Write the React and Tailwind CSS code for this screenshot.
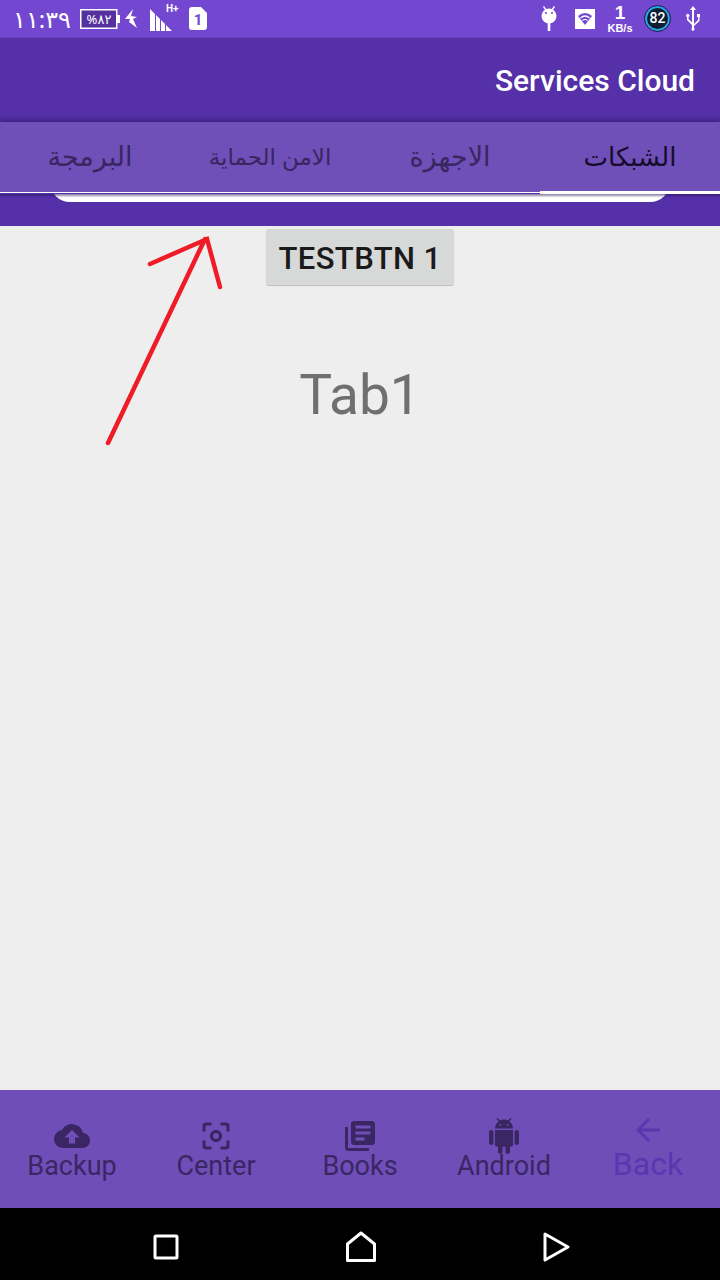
import React from "react";
import { MdCloudUpload, MdCenterFocusWeak, MdLibraryBooks, MdArrowBack } from "react-icons/md";

function Tab({ label, active, size }) {
  return (
    <div className={`flex-1 flex items-center justify-center ${size} ${active ? "text-[#140c2a]" : "text-[#38265f]"}`}>
      <span dir="rtl">{label}</span>
    </div>
  );
}

function AndroidIcon() {
  return (
    <svg width="36" height="36" viewBox="0 0 24 24" fill="currentColor">
      <path d="M6 18c0 .55.45 1 1 1h1v3.5c0 .83.67 1.5 1.5 1.5s1.5-.67 1.5-1.5V19h2v3.5c0 .83.67 1.5 1.5 1.5s1.5-.67 1.5-1.500V19h1c.55 0 1-.45 1-1V8H6v10zM3.5 8C2.67 8 2 8.67 2 9.5v7c0 .83.67 1.5 1.5 1.5S5 17.33 5 16.5v-7C5 8.67 4.33 8 3.5 8zm17 0c-.83 0-1.5.67-1.5 1.5v7c0 .83.67 1.5 1.5 1.5s1.5-.67 1.5-1.500v-7c0-.83-.67-1.5-1.500-1.500zm-4.970-5.840l1.300-1.300c.2-.2.2-.51 0-.71-.2-.2-.51-.2-.71 0l-1.480 1.480C13.850 1.230 12.950 1 12 1c-.96 0-1.860.23-2.660.63L7.850.15c-.2-.2-.51-.2-.71 0-.2.2-.2.51 0 .71l1.310 1.310C6.970 3.260 6 5.010 6 7h12c0-1.990-.97-3.750-2.470-4.840zM10 5H9V4h1v1zm5 0h-1V4h1v1z" />
    </svg>
  );
}

function NavItem({ icon, label, dim }) {
  return (
    <div className={`flex-1 flex flex-col items-center ${dim ? "text-[#5a36b0]" : "text-[#3a2663]"}`}>
      <div className="h-[36px] flex items-end justify-center">{icon}</div>
      <span className={`leading-[30px] ${dim ? "text-[32px] -mt-[5px]" : "text-[27px] -mt-[3px]"}`}>{label}</span>
    </div>
  );
}

export default function App() {
  return (
    <div className="relative w-[720px] h-[1280px] flex flex-col bg-[#eeeeee] overflow-hidden font-['Roboto','Noto_Sans',sans-serif]">
      {/* status bar */}
      <div className="h-[38px] shrink-0 bg-[#7347cf] border-b border-[#6a40c0] flex items-center justify-between pl-[13px] pr-[19px] text-white">
        <div className="flex items-center">
          <span dir="ltr" className="text-[24px] leading-none tracking-[-1px] font-['Noto_Sans','DejaVu_Sans',sans-serif] w-[67px]">١١:٣٩</span>
          <svg width="40" height="20" viewBox="0 0 40 20" className="block">
            <rect x="0.750" y="0.750" width="36" height="18.500" fill="#55309f" stroke="#fff" strokeWidth="1.500" />
            <rect x="37" y="6" width="3" height="8" fill="#fff" />
            <text x="19" y="15" textAnchor="middle" fontSize="13" fontWeight="400" fill="#fff" fontFamily="Noto Sans, DejaVu Sans">%٨٢</text>
          </svg>
          <svg width="14" height="20" viewBox="0 0 14 20" className="ml-[4px]">
            <path d="M9 0 L1 10 L6 10 L5 13 L13 19 L9 10 L13 8 L7 7 Z" fill="#fff" />
          </svg>
          <div className="relative ml-[12px] mt-[2px] w-[22px] h-[22px]">
            <svg width="22" height="22" viewBox="0 0 22 22" className="block">
              <path d="M0 0 L5 5 V22 H0 Z M6 6 L10 10 V22 H6 Z M11 11 L15 15 V22 H11 Z M16 16 L22 22 H16 Z" fill="#fff" />
            </svg>
            <span className="absolute left-[16px] -top-[5px] text-[10px] font-bold leading-none">H+</span>
          </div>
          <svg width="18" height="23" viewBox="0 0 18 23" className="ml-[17px]">
            <path d="M3 0 H12 L18 6 V20 a3 3 0 0 1 -3 3 H3 a3 3 0 0 1 -3 -3 V3 a3 3 0 0 1 3 -3 Z" fill="#fff" />
            <text x="9" y="18" textAnchor="middle" fontSize="15" fontWeight="700" fill="#7347cf" fontFamily="Roboto">1</text>
          </svg>
        </div>
        <div className="flex items-center">
          <svg width="16" height="25" viewBox="0 0 16 25">
            <path d="M2.500 0.500 L5 4 M13.500 0.500 L11 4" stroke="#fff" strokeWidth="1.300" />
            <circle cx="8" cy="10" r="7.500" fill="#fff" />
            <rect x="6.700" y="16" width="2.600" height="9" fill="#fff" />
            <circle cx="5" cy="7" r="1" fill="#7347cf" />
            <circle cx="11" cy="7" r="1" fill="#7347cf" />
          </svg>
          <svg width="20" height="20" viewBox="0 0 20 20" className="ml-[18px]">
            <rect width="20" height="20" fill="#fff" />
            <path d="M3 7 Q10 1 17 7 L10 16 Z" fill="#7347cf" />
            <path d="M5.500 9 Q10 5 14.500 9 M7.500 11.500 Q10 9.500 12.500 11.500" stroke="#fff" strokeWidth="1.200" fill="none" />
          </svg>
          <div className="ml-[12px] w-[26px] flex flex-col items-center font-['Liberation_Sans',sans-serif] font-bold leading-none">
            <span className="text-[19px] leading-[16px]">1</span>
            <span className="text-[11px] leading-[10px] mt-[2px]">KB/s</span>
          </div>
          <div className="ml-[12px] w-[25px] h-[25px] rounded-full bg-[#0b1f33] border-[2px] border-[#2aa7e8] outline outline-1 outline-[#14233f] flex items-center justify-center text-[14px] font-medium">82</div>
          <svg width="16" height="25" viewBox="0 0 16 25" className="ml-[15px]">
            <path d="M8 0 L11 4 H9 V18 L13 14 V11 H12 V8 H15 V11 H14.500 V15 L9 20 V22 a1.500 1.500 0 1 1 -2 0 V19 L2 14 V11 a1.600 1.600 0 1 1 1.500 0 V13 L7 16.500 V4 H5 Z" fill="#fff" />
          </svg>
        </div>
      </div>

      {/* app bar */}
      <div className="h-[84px] shrink-0 bg-[#5530a8] flex items-center justify-end pr-[25px]">
        <span className="text-white text-[30px] font-medium">Services Cloud</span>
      </div>

      {/* tabs */}
      <div className="relative z-10 h-[72px] shrink-0 bg-[#6f4fb8] flex flex-col shadow-[0_-3px_4px_rgba(40,20,90,0.45),0_2px_2px_rgba(40,20,90,0.5)] font-['Noto_Sans','DejaVu_Sans',sans-serif]">
        <div className="flex-1 flex">
          <Tab label="البرمجة" size="text-[27px]" />
          <Tab label="الامن الحماية" size="text-[23px]" />
          <Tab label="الاجهزة" size="text-[27px]" />
          <Tab label="الشبكات" size="text-[26px]" active />
        </div>
        <div className="h-[3px] flex">
          <div className="w-[540px] flex flex-col">
            <div className="h-[1px] mt-[1px] bg-white" />
            <div className="h-[1px] bg-[#5530a8]" />
          </div>
          <div className="w-[180px] bg-white" />
        </div>
      </div>

      {/* search pill strip */}
      <div className="h-[32px] shrink-0 bg-[#5530a8] overflow-hidden">
        <div className="mx-[50px] h-[40px] -mt-[32px] bg-white rounded-[20px]" />
      </div>

      {/* content */}
      <div className="flex-1 flex flex-col items-center pt-[3px]">
        <div className="w-[188px] h-[56px] pt-[5px] rounded-[3px] bg-[#d7d8d8] shadow-[0_1px_1px_rgba(0,0,0,0.2)] flex items-center justify-center text-[31px] font-medium text-[#1a1a1a] tracking-[0.4px]">
          TESTBTN 1
        </div>
        <span className="mt-[74px] text-[55px] leading-[72px] text-[#6f6f6f]">Tab1</span>
      </div>

      {/* arrow annotation */}
      <svg className="absolute left-[100px] top-[230px]" width="130" height="220" viewBox="0 0 130 220">
        <path d="M8 213 L105 9 M50 34 L107 9 L120 57" stroke="#ef1c27" strokeWidth="4.500" strokeLinecap="round" fill="none" />
      </svg>

      {/* bottom nav */}
      <div className="h-[118px] shrink-0 bg-[#6f4eb8] flex pt-[28px]">
        <NavItem label="Backup" icon={<MdCloudUpload size={36} />} />
        <NavItem label="Center" icon={<MdCenterFocusWeak size={36} />} />
        <NavItem label="Books" icon={<MdLibraryBooks size={36} />} />
        <NavItem label="Android" icon={<AndroidIcon />} />
        <NavItem dim label="Back" icon={<MdArrowBack size={36} className="mb-[6px]" />} />
      </div>

      {/* system nav */}
      <div className="h-[72px] shrink-0 bg-black flex items-center justify-between pl-[153px] pr-[150px] pt-[5px]">
        <svg width="26" height="26" viewBox="0 0 26 26">
          <rect x="2" y="2" width="22" height="22" rx="1" fill="none" stroke="#fff" strokeWidth="3" />
        </svg>
        <svg width="30" height="31" viewBox="0 0 30 31">
          <path d="M1.500 13 L15 2 L28.500 13 V29.500 H1.500 Z" fill="none" stroke="#fff" strokeWidth="3" strokeLinejoin="round" />
        </svg>
        <svg width="28" height="30" viewBox="0 0 28 30">
          <path d="M3 2 L26 15 L3 28 Z" fill="none" stroke="#fff" strokeWidth="3" strokeLinejoin="round" />
        </svg>
      </div>
    </div>
  );
}
